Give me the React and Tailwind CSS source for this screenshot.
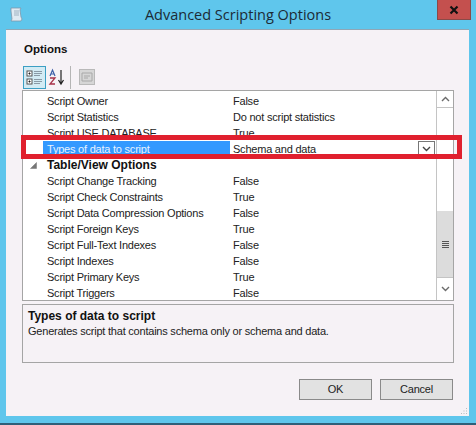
const topRows = [
  ['Script Owner', 'False'],
  ['Script Statistics', 'Do not script statistics'],
  ['Script USE DATABASE', 'True'],
];

const tableRows = [
  ['Script Change Tracking', 'False'],
  ['Script Check Constraints', 'True'],
  ['Script Data Compression Options', 'False'],
  ['Script Foreign Keys', 'True'],
  ['Script Full-Text Indexes', 'False'],
  ['Script Indexes', 'False'],
  ['Script Primary Keys', 'True'],
  ['Script Triggers', 'False'],
];

const Row = ({ name, value }) => (
  <div className="flex h-4 items-center">
    <div className="w-[210px] shrink-0 pl-[24px] whitespace-nowrap">{name}</div>
    <div className="whitespace-nowrap">{value}</div>
  </div>
);

const Chevron = ({ d, stroke = '#6b6b6b' }) => (
  <svg width="9" height="6" viewBox="0 0 9 6" fill="none">
    <path d={d} stroke={stroke} strokeWidth="1.4" />
  </svg>
);

const App = () => {
  return (
    <div className="relative flex h-[425px] w-[476px] flex-col overflow-hidden bg-[#5fc6ec] font-['Liberation_Sans',sans-serif] text-[11px] tracking-[-0.22px] text-[#222]">
      {/* Title bar */}
      <div className="relative flex h-[29px] shrink-0 items-center justify-center">
        <svg className="absolute left-[9px] top-[7px]" width="15" height="15" viewBox="0 0 15 15">
          <path d="M2 1h10l-1 2 1 7 1 2-1 2H2l1-2-1-8z" fill="#dfeaf2" stroke="#7d98ac" strokeWidth="0.8" />
          <path d="M5 4h5M5 6h5M5 8h5" stroke="#8ea4b5" strokeWidth="0.8" />
        </svg>
        <span className="font-['Open_Sans',sans-serif] text-[14.5px] tracking-normal text-[#1c2b36]">Advanced Scripting Options</span>
        <button className="absolute left-[437px] top-0 flex h-[20px] w-[34px] items-center justify-center border border-t-0 border-[#8a4a48] bg-[#c4504e]">
          <svg width="10" height="10" viewBox="0 0 10 10">
            <path d="M1.5 1.5l7 7M8.5 1.5l-7 7" stroke="#111" strokeWidth="2.2" />
          </svg>
        </button>
      </div>

      {/* Dialog body */}
      <div className="relative ml-[6px] flex h-[387px] w-[463px] shrink-0 flex-col border-t border-[#8fa6b5] bg-[#f6f2f6] pl-[16px] pr-[15px]">
        <div className="mt-[12px] h-[14px] pl-[2px] text-[11.5px] leading-[14px] font-bold tracking-normal text-[#111]">Options</div>

        {/* Toolbar */}
        <div className="mt-[8px] flex h-[26px] items-center pl-px">
          <div className="flex h-[23px] w-[23px] items-center justify-center border border-[#3c9fc4] bg-[#d3ebf4]">
            <svg width="17" height="17" viewBox="0 0 17 17" fill="none">
              <rect x="1" y="2" width="5" height="5" fill="#fff" stroke="#555" />
              <rect x="1" y="10" width="5" height="5" fill="#fff" stroke="#555" />
              <path d="M2.5 4.5h2M3.5 3.5v2M2.5 12.5h2M3.5 11.5v2" stroke="#222" />
              <path d="M8 2.5h8M8 4.5h8M8 6.5h6M8 10.5h8M8 12.5h8M8 14.5h6" stroke="#8a9aa6" />
            </svg>
          </div>
          <div className="ml-[2px] flex h-[23px] w-[20px] items-center">
            <svg width="18" height="18" viewBox="0 0 18 18" fill="none">
              <path d="M2 8l2.5-6L7 8M3 6h3" stroke="#3c5fa8" strokeWidth="1.2" />
              <path d="M2 10h5l-5 6h5" stroke="#a8324a" strokeWidth="1.3" />
              <path d="M13 2v13M10.5 12l2.5 4 2.5-4" stroke="#222" strokeWidth="1.2" />
            </svg>
          </div>
          <div className="ml-[2px] h-[23px] w-px bg-[#b5b5b5]" />
          <div className="ml-[8px] flex h-[16px] w-[16px] items-center justify-center border border-[#b9b9b9] bg-[#d6d6d6]">
            <svg width="12" height="10" viewBox="0 0 12 10" fill="none">
              <path d="M1 1h10v8H1zM3 4h6M3 6h4" stroke="#a8a8a8" />
            </svg>
          </div>
        </div>

        {/* Property grid */}
        <div className="flex h-[211px] w-[432px] border border-[#a5a5a5] bg-white">
          <div className="h-full w-[413px] shrink-0 overflow-hidden pt-[2px]">
            {topRows.map(([name, value]) => (
              <Row key={name} name={name} value={value} />
            ))}
            <div className="flex h-4 items-center">
              <div className="ml-[20px] flex h-full w-[187px] shrink-0 items-center bg-[#3399ff] pl-[4px] text-[#e6f2ff]">Types of data to script</div>
              <div className="pl-[3px]">Schema and data</div>
              <div className="mr-[1px] ml-auto flex h-4 w-[17px] items-center justify-center border border-[#777] bg-white">
                <Chevron d="M1 1l3.5 3.5L8 1" stroke="#444" />
              </div>
            </div>
            <div className="flex h-4 items-center">
              <svg className="mr-[10px] ml-[7px]" width="7" height="7" viewBox="0 0 7 7">
                <path d="M6.5 0.5v6h-6z" fill="#777" stroke="#777" strokeWidth="0.5" />
              </svg>
              <span className="text-[12px] font-bold tracking-normal text-[#111]">Table/View Options</span>
            </div>
            {tableRows.map(([name, value]) => (
              <Row key={name} name={name} value={value} />
            ))}
          </div>

          {/* Scrollbar */}
          <div className="flex h-full w-[17px] shrink-0 flex-col border-l border-[#c4c4c4]">
            <div className="flex h-[17px] shrink-0 items-center justify-center border-b border-[#c4c4c4]">
              <Chevron d="M1 5l3.5-3.5L8 5" />
            </div>
            <div className="h-[103px] shrink-0" />
            <div className="flex h-[66px] shrink-0 flex-col items-center justify-center gap-px bg-[#dcdcdc]">
              <div className="h-px w-[7px] bg-[#555]" />
              <div className="h-px w-[7px] bg-[#555]" />
              <div className="h-px w-[7px] bg-[#555]" />
              <div className="h-px w-[7px] bg-[#555]" />
            </div>
            <div className="flex flex-1 items-center justify-center border-t border-[#c4c4c4]">
              <Chevron d="M1 1l3.5 3.5L8 1" />
            </div>
          </div>
        </div>

        {/* Description */}
        <div className="mt-[3px] h-[59px] w-[432px] border border-[#a5a5a5] pt-[4px] pl-[5px]">
          <div className="h-[15px] text-[12px] leading-[15px] font-bold tracking-normal text-[#111]">Types of data to script</div>
          <div className="h-[15px] leading-[15px]">Generates script that contains schema only or schema and data.</div>
        </div>

        {/* Buttons */}
        <div className="mt-[16px] flex justify-end gap-[8px] pr-[1px]">
          <button className="h-[21px] w-[73px] border border-[#8a8a8a] bg-[#e2e2e2] text-center">OK</button>
          <button className="h-[21px] w-[73px] border border-[#8a8a8a] bg-[#e2e2e2] text-center">Cancel</button>
        </div>

        {/* Resize grip */}
        <svg className="absolute right-[1px] bottom-[1px]" width="8" height="8" viewBox="0 0 8 8">
          <path d="M6 1h1v1H6zM6 3.5h1v1H6zM3.5 3.5h1v1h-1zM6 6h1v1H6zM3.5 6h1v1h-1zM1 6h1v1H1z" fill="#b8bcc0" />
        </svg>
      </div>

      <div className="mt-auto h-[2px] bg-[#2f5f78]" />

      {/* Red annotation drawn over the screenshot */}
      <div className="absolute top-[135px] left-[21px] h-[24px] w-[441px] border-[5px] border-[#e0202e]" />
    </div>
  );
};

export default App;
